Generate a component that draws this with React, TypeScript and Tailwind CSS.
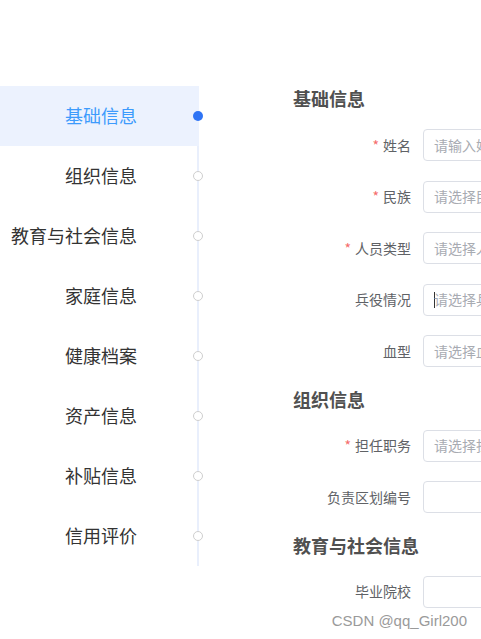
import React from 'react';

const navItems = ['基础信息', '组织信息', '教育与社会信息', '家庭信息', '健康档案', '资产信息', '补贴信息', '信用评价'];

type Field = { label: string; required?: boolean; placeholder?: string };
type Section = { title: string; fields: Field[] };

const sections: Section[] = [
  {
    title: '基础信息',
    fields: [
      { label: '姓名', required: true, placeholder: '请输入姓名' },
      { label: '民族', required: true, placeholder: '请选择民族' },
      { label: '人员类型', required: true, placeholder: '请选择人员类型' },
      { label: '兵役情况', placeholder: '请选择兵役情况' },
      { label: '血型', placeholder: '请选择血型' },
    ],
  },
  {
    title: '组织信息',
    fields: [
      { label: '担任职务', required: true, placeholder: '请选择担任职务' },
      { label: '负责区划编号' },
    ],
  },
  {
    title: '教育与社会信息',
    fields: [{ label: '毕业院校' }],
  },
];

const cjk = { fontFamily: '"Noto Sans CJK SC", "Noto Sans", sans-serif' };

export default function App() {
  return (
    <div className="relative w-[481px] h-[639px] overflow-hidden bg-white" style={cjk}>
      <div className="flex pt-[86px]">
        {/* side nav */}
        <div className="w-[199px] shrink-0">
          {navItems.map((item, i) => {
            const active = i === 0;
            return (
              <div
                key={item}
                className={`relative h-[60px] flex items-center justify-end pr-[60px] pb-[2px] text-[18px] border-r-2 ${
                  active ? 'bg-[#ecf2fe] border-transparent text-[#3d9bfc]' : 'border-[#e9effc] text-[#333333]'
                }`}
              >
                {item}
                <span
                  className={`absolute right-[-6px] top-1/2 -translate-y-1/2 w-[10px] h-[10px] rounded-full ${
                    active ? 'bg-[#2f74f5]' : 'bg-white border border-[#cfcfcf]'
                  }`}
                />
              </div>
            );
          })}
        </div>

        {/* form */}
        <div className="pl-[94px] shrink-0">
          {sections.map((s) => (
            <div key={s.title}>
              <h2 className="h-6 leading-6 mb-[19px] text-[18px] font-bold text-[#505050]">{s.title}</h2>
              {s.fields.map((f) => (
                <div key={f.label} className="flex items-center h-8 mb-[19.5px]">
                  <label className="w-[118px] shrink-0 text-right text-[14px] text-[#606266]">
                    {f.required && <span className="text-[#f56c6c] mr-1">*</span>}
                    {f.label}
                  </label>
                  <div className="ml-3 w-[220px] h-8 shrink-0 rounded border border-[#dcdfe6] flex items-center pl-[10px] text-[14px] text-[#a8abb2]">
                    {f.label === '兵役情况' && <span className="w-px h-[16px] bg-[#333] -mr-px" />}
                    {f.placeholder}
                  </div>
                </div>
              ))}
            </div>
          ))}
        </div>
      </div>

      <div
        className="absolute right-[14px] bottom-[7px] text-[15px] text-[#9a9a9a]"
        style={{ fontFamily: '"Liberation Sans", Arial, sans-serif' }}
      >
        CSDN @qq_Girl200
      </div>
    </div>
  );
}
